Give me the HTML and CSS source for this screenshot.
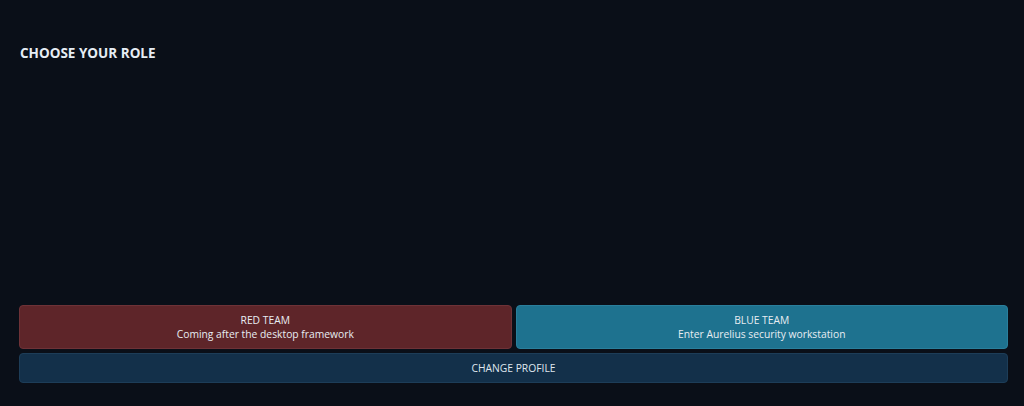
FILE: index.html
```html
<!DOCTYPE html>
<html lang="en">
<head>
<meta charset="utf-8">
<title>Choose your role</title>
<link rel="stylesheet" href="styles.css">
</head>
<body>
<main class="role-screen">
  <h1 class="role-title">CHOOSE YOUR ROLE</h1>
  <div class="role-actions">
    <div class="team-row">
      <button class="team-btn team-red" type="button">
        <span class="team-name">RED TEAM</span>
        <span class="team-desc">Coming after the desktop framework</span>
      </button>
      <button class="team-btn team-blue" type="button">
        <span class="team-name">BLUE TEAM</span>
        <span class="team-desc">Enter Aurelius security workstation</span>
      </button>
    </div>
    <button class="profile-btn" type="button">CHANGE PROFILE</button>
  </div>
</main>
</body>
</html>
```

FILE: styles.css
```css
html, body {
  margin: 0;
  height: 100%;
  background: #0a0f18;
}

body {
  font-family: "Open Sans", "Noto Sans", sans-serif;
  color: #dfe6ee;
}

.role-screen {
  box-sizing: border-box;
  height: 406px;
  padding: 44px 16px 23px 19px;
  display: flex;
  flex-direction: column;
  justify-content: space-between;
}

.role-title {
  margin: 0;
  font-size: 13.5px;
  font-weight: 700;
  color: #e6edf4;
  padding-left: 1px;
}

.role-actions {
  display: flex;
  flex-direction: column;
  gap: 4px;
}

.team-row {
  display: grid;
  grid-template-columns: 1fr 1fr;
  gap: 4px;
}

button {
  font-family: "Open Sans", "Noto Sans", sans-serif;
  cursor: pointer;
}

.team-btn {
  height: 44px;
  display: flex;
  flex-direction: column;
  align-items: center;
  justify-content: center;
  border-radius: 4px;
  font-size: 10.3px;
  line-height: 14px;
  color: #e8edf2;
  padding: 0;
}

.team-red {
  background: #5e2529;
  border: 1px solid #6e3237;
}

.team-blue {
  background: #1e728f;
  border: 1px solid #2a7f9c;
}

.profile-btn {
  height: 30px;
  background: #13304a;
  border: 1px solid #1d3d58;
  border-radius: 4px;
  font-size: 10.3px;
  color: #dfe6ee;
  padding: 0;
}
```
